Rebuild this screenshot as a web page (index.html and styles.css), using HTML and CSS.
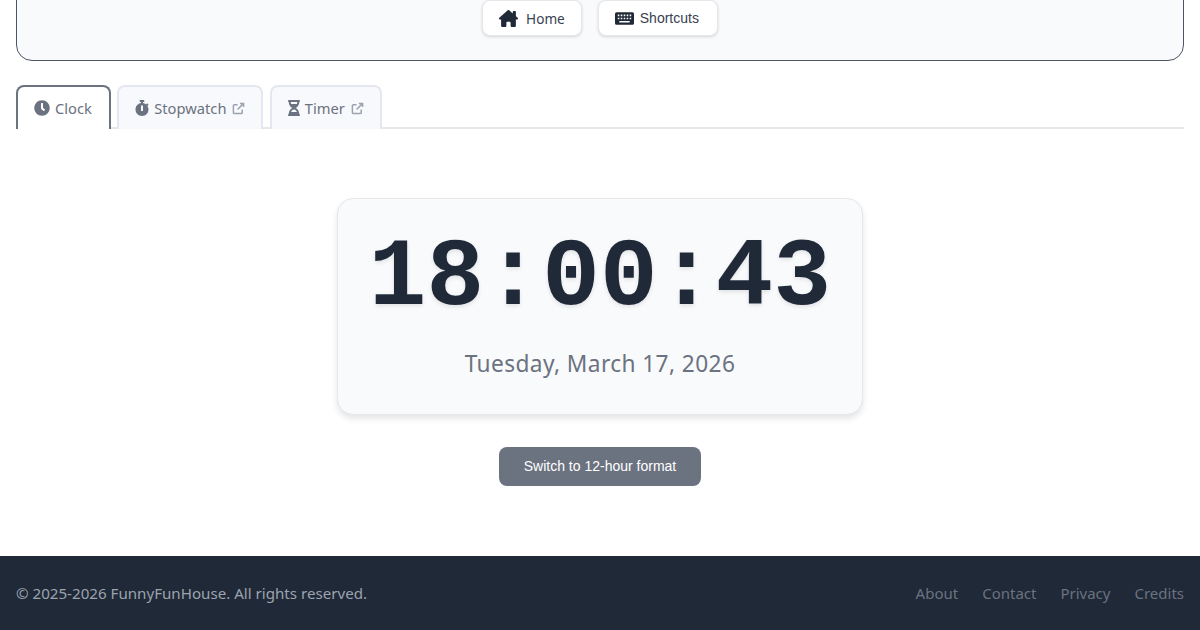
FILE: index.html
```html
<!DOCTYPE html>
<html lang="en">
<head>
    <meta charset="UTF-8">
    <meta name="viewport" content="width=device-width, initial-scale=1.0">
    <title>Clock - FunnyFunHouse</title>
    <link rel="stylesheet" href="styles.css">
</head>
<body>
    <div class="page">
        <header class="top-panel">
            <a class="nav-btn home-btn" href="#">
                <svg class="nav-icon" viewBox="0 0 576 512"><path d="M543.8 287.6c17 0 32-14 32-32.1c1-9-3-17-11-24L512 185V64c0-17.700-14.300-32-32-32H448c-17.700 0-32 14.300-32 32v36.700L309.500 7c-6-5-14-7-21-7s-15 1-22 8L10 231.500c-7 7-10 15-10 24c0 18 14 32.100 32 32.100h32V472c0 22.100 17.900 40 40 40h80c22.100 0 40-17.900 40-40V384c0-17.700 14.300-32 32-32h64c17.700 0 32 14.300 32 32v88c0 22.100 17.900 40 40 40h80c22.100 0 40-17.900 40-40l-.7-184.400z"/></svg>
                <span>Home</span>
            </a>
            <button class="nav-btn shortcuts-btn" type="button">
                <svg class="nav-icon" viewBox="0 0 576 512"><path fill-rule="evenodd" d="M48 64h480a48 48 0 0 1 48 48v288a48 48 0 0 1-48 48H48a48 48 0 0 1-48-48V112a48 48 0 0 1 48-48zM84 136v48h48v-48zm90 0v48h48v-48zm90 0v48h48v-48zm90 0v48h48v-48zm90 0v48h48v-48zM84 232v48h48v-48zm90 0v48h48v-48zm90 0v48h48v-48zm90 0v48h48v-48zm90 0v48h48v-48zM132 328v48h312v-48z"/></svg>
                <span>Shortcuts</span>
            </button>
        </header>

        <nav class="tabs">
            <a class="tab active" href="#">
                <svg class="tab-icon" viewBox="0 0 512 512"><path d="M256,8C119,8,8,119,8,256S119,504,256,504,504,393,504,256,393,8,256,8Zm92.49,313h0l-20,25a16,16,0,0,1-22.49,2.5h0l-67-49.72a40,40,0,0,1-15-31.23V112a16,16,0,0,1,16-16h32a16,16,0,0,1,16,16V256l58,42.5A16,16,0,0,1,348.49,321Z"/></svg>
                Clock
            </a>
            <a class="tab" href="#">
                <svg class="tab-icon" viewBox="0 0 448 512"><path d="M432 304c0 114.9-93.1 208-208 208S16 418.9 16 304c0-104 76.3-190.2 176-205.5V64h-28c-6.6 0-12-5.4-12-12V12c0-6.6 5.4-12 12-12h120c6.6 0 12 5.4 12 12v40c0 6.6-5.4 12-12 12h-28v34.5c37.5 5.8 71.7 21.6 99.7 44.6l27.5-27.5c4.7-4.7 12.3-4.7 17 0l28.3 28.3c4.7 4.7 4.7 12.3 0 17l-29.4 29.4-.6.6C419.7 223.3 432 262.2 432 304zm-176 36V188.5c0-6.6-5.4-12-12-12h-40c-6.6 0-12 5.4-12 12V340c0 6.6 5.4 12 12 12h40c6.6 0 12-5.4 12-12z"/></svg>
                Stopwatch
                <svg class="ext-icon" viewBox="0 0 14 14"><path d="M11 8v3.500a1 1 0 0 1-1 1H2.500a1 1 0 0 1-1-1V4a1 1 0 0 1 1-1H6M8.500 1.500h4v4M12.500 1.500L6 8"/></svg>
            </a>
            <a class="tab" href="#">
                <svg class="tab-icon" viewBox="0 0 384 512"><path d="M360 0H24C10.745 0 0 10.745 0 24v16c0 13.255 10.745 24 24 24 0 90.965 51.016 167.734 120.842 192C75.016 280.266 24 357.035 24 448c-13.255 0-24 10.745-24 24v16c0 13.255 10.745 24 24 24h336c13.255 0 24-10.745 24-24v-16c0-13.255-10.745-24-24-24 0-90.965-51.016-167.734-120.842-192C308.984 231.734 360 154.965 360 64c13.255 0 24-10.745 24-24V24c0-13.255-10.745-24-24-24zm-75.078 384H99.08c17.059-46.797 52.096-80 92.92-80 40.821 0 75.862 33.196 92.922 80zm.019-256H99.078C91.988 108.548 88 86.748 88 64h208c0 22.805-3.987 44.587-11.059 64z"/></svg>
                Timer
                <svg class="ext-icon" viewBox="0 0 14 14"><path d="M11 8v3.500a1 1 0 0 1-1 1H2.500a1 1 0 0 1-1-1V4a1 1 0 0 1 1-1H6M8.500 1.500h4v4M12.500 1.500L6 8"/></svg>
            </a>
        </nav>

        <main class="clock-section">
            <div class="clock-card">
                <div class="clock-time">18:00:43</div>
                <div class="clock-date">Tuesday, March 17, 2026</div>
            </div>
            <button class="format-btn" type="button">Switch to 12-hour format</button>
        </main>
    </div>

    <footer class="site-footer">
        <p>© 2025-2026 FunnyFunHouse. All rights reserved.</p>
        <div class="footer-links">
            <a href="#">About</a>
            <a href="#">Contact</a>
            <a href="#">Privacy</a>
            <a href="#">Credits</a>
        </div>
    </footer>
</body>
</html>
```
FILE: styles.css
```css
* { box-sizing: border-box; }
html, body { margin: 0; height: 630px; overflow: hidden; }
body { display: flex; flex-direction: column; background: white; color: #1f2937; font-family: "Noto Sans", sans-serif; font-size: 15.14px; }
a { text-decoration: none; }

.page { flex: 1; padding: 0 16px; }

/* the panel runs off the top of the window */
.top-panel { display: flex; justify-content: center; align-items: flex-end; gap: 16px; height: 81px; margin-top: -20px; padding-bottom: 24px; background: #f9fafc; border: 1px solid #4b5563; border-radius: 16px; }
.nav-btn { display: flex; align-items: center; height: 36px; background: white; color: #374151; border: 1px solid #e5e7eb; border-radius: 8px; box-shadow: 0 1px 3px rgba(0,0,0,0.15); font-size: 13.6px; }
.home-btn { gap: 8px; padding: 0 16px; }
.home-btn span { padding-top: 1px; }
.shortcuts-btn { gap: 6px; padding: 0 18px 0 16px; font-family: "Liberation Sans", sans-serif; font-size: 14px; }
.nav-icon { width: 19px; height: 17px; fill: #1f2937; }

.tabs { display: flex; gap: 6.4px; height: 44px; margin-top: 24px; border-bottom: 2px solid #e5e7eb; font-size: 14.7px; }
.tab { display: flex; align-items: center; height: 44px; padding: 0 16px; background: #f8f9fc; color: #6b7280; border: 2px solid #e5e7f0; border-bottom: none; border-radius: 8px 8px 0 0; }
.tab.active { padding-right: 17px; background: white; border-color: #6b7280; }
.tab-icon { height: 16px; width: auto; margin-right: 5px; fill: #6b7280; }
.ext-icon { width: 13px; height: 13px; margin-left: 6px; fill: none; stroke: #9ca3af; stroke-width: 1.6; }

.clock-section { display: flex; flex-direction: column; align-items: center; padding-top: 69px; }
.clock-card { width: 526px; height: 217px; padding-top: 27px; background: #f9fafc; border: 1px solid #e5e7eb; border-radius: 16px; box-shadow: 0 4px 6px rgba(0,0,0,0.1); text-align: center; }
.clock-time { color: #1f2937; font-family: "Liberation Mono", monospace; font-size: 96px; font-weight: bold; line-height: 1.1; letter-spacing: 0.2px; text-shadow: 0 2px 4px rgba(0,0,0,0.1); }
.clock-date { margin-top: 16px; color: #6b7280; font-size: 22.7px; letter-spacing: 0.4px; }
.format-btn { width: 202px; height: 39px; margin-top: 32px; padding-bottom: 2px; background: #6b7280; color: white; border: none; border-radius: 8px; font-family: "Liberation Sans", sans-serif; font-size: 14px; }

.site-footer { display: flex; justify-content: space-between; align-items: center; height: 74px; padding: 0 16px; background: #1f2937; color: #9ca3af; }
.site-footer p { margin: 0; }
.footer-links { display: flex; gap: 24px; font-size: 15px; }
.footer-links a { color: #6b7280; }
```
